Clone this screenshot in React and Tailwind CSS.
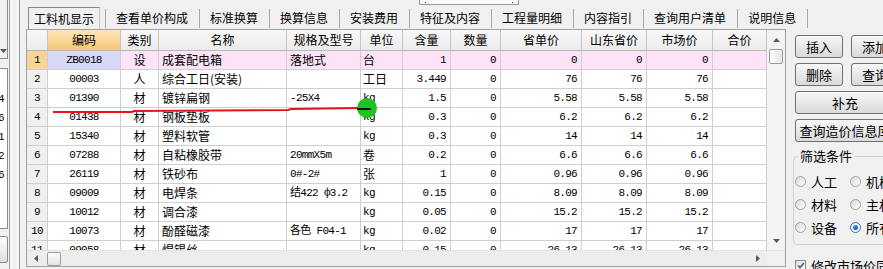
import React from 'react';

const cjk = "font-['Noto_Sans_CJK_SC','Noto_Sans',sans-serif]";
const mono = "font-['Liberation_Mono','Noto_Sans_CJK_SC',monospace] text-[11px] tracking-[-0.7px]";

const tabs = ['查看单价构成', '标准换算', '换算信息', '安装费用', '特征及内容', '工程量明细', '内容指引', '查询用户清单', '说明信息'];

// column widths and alignment
const cols = [
    { title: '', w: 'w-[21px]', align: 'justify-center' },
    { title: '编码', w: 'w-[73px]', align: 'justify-center' },
    { title: '类别', w: 'w-[38px]', align: 'justify-center' },
    { title: '名称', w: 'w-[128px]', align: 'justify-start pl-[3px]' },
    { title: '规格及型号', w: 'w-[74px]', align: 'justify-start pl-[3px]' },
    { title: '单位', w: 'w-[42px]', align: 'justify-start pl-[2px]' },
    { title: '含量', w: 'w-[48px]', align: 'justify-end pr-[4px]' },
    { title: '数量', w: 'w-[50px]', align: 'justify-end pr-[4px]' },
    { title: '省单价', w: 'w-[81px]', align: 'justify-end pr-[4px]' },
    { title: '山东省价', w: 'w-[65px]', align: 'justify-end pr-[4px]' },
    { title: '市场价', w: 'w-[66px]', align: 'justify-end pr-[4px]' },
    { title: '合价', w: 'w-[54px]', align: 'justify-end pr-[4px]' },
];

const rows = [
    ['1', 'ZB0018', '设', '成套配电箱', '落地式', '台', '1', '0', '0', '0', '0', ''],
    ['2', '00003', '人', '综合工日(安装)', '', '工日', '3.449', '0', '76', '76', '76', ''],
    ['3', '01390', '材', '镀锌扁钢', '-25X4', 'kg', '1.5', '0', '5.58', '5.58', '5.58', ''],
    ['4', '01438', '材', '钢板垫板', '', 'kg', '0.3', '0', '6.2', '6.2', '6.2', ''],
    ['5', '15340', '材', '塑料软管', '', 'kg', '0.3', '0', '14', '14', '14', ''],
    ['6', '07288', '材', '自粘橡胶带', '20mmX5m', '卷', '0.2', '0', '6.6', '6.6', '6.6', ''],
    ['7', '26119', '材', '铁砂布', '0#-2#', '张', '1', '0', '0.96', '0.96', '0.96', ''],
    ['8', '09009', '材', '电焊条', '结422 ф3.2', 'kg', '0.15', '0', '8.09', '8.09', '8.09', ''],
    ['9', '10012', '材', '调合漆', '', 'kg', '0.05', '0', '15.2', '15.2', '15.2', ''],
    ['10', '10073', '材', '酚醛磁漆', '各色 F04-1', 'kg', '0.02', '0', '17', '17', '17', ''],
    ['11', '09058', '材', '焊锡丝', '', 'kg', '0.15', '0', '26.13', '26.13', '26.13', ''],
];

const fontFor = (v) => (/[A-Za-z0-9]/.test(v) ? mono : `${cjk} text-[12px]`);

const Arrow = ({ dir }) => {
    const pts = { up: '0,4 3.5,0 7,4', down: '0,0 3.5,4 7,0', left: '4,0 0,3.5 4,7', right: '0,0 4,3.5 0,7' }[dir];
    const vertical = dir === 'up' || dir === 'down';
    return (
        <svg width={vertical ? 7 : 4} height={vertical ? 4 : 7}>
            <polygon points={pts} fill="#5a5a5a" />
        </svg>
    );
};

const LeftStrip = () => (
    <div className="w-[25px] h-full shrink-0 flex">
        <div className="w-[8px] flex flex-col">
            <div className="h-[59px] border-r border-b border-[#8c8c8c] relative">
                <div className="absolute left-0 bottom-[5px]"><Arrow dir="down" /></div>
            </div>
            <div className="mt-[9px] h-[161px] bg-white border-r border-y border-[#8c8c8c] overflow-hidden pt-[21px]">
                {['4', '6', '1', '2', '6'].map((n, i) => (
                    <div key={i} className={`h-[19px] flex items-center justify-end pr-[3px] ${mono}`}>{n}</div>
                ))}
            </div>
            <div className="mt-[7px] h-[27px] border border-l-0 border-[#8c8c8c] rounded-r-[3px] bg-linear-to-b from-white to-[#dedede]" />
        </div>
        <div className="ml-[1px] w-[3px] border-l border-[#a0a0a0] border-r border-r-white" />
        <div className="ml-[5px] w-[3px] border-l border-white border-r border-r-[#a0a0a0]" />
        <div className="ml-[3px] w-[2px]" />
    </div>
);

const Tabs = () => (
    <div className={`relative h-[29px] flex items-end text-[12px] whitespace-nowrap ${cjk}`}>
        <div className="absolute left-[394px] top-0 w-[100px] h-[5px] border-x border-b border-[#9a9a9a] bg-[#fafafa] flex justify-between items-center px-[5px]">
            <span className="w-[1px] h-[1px] bg-[#444]" />
            <span className="w-[1px] h-[1px] bg-[#444]" />
        </div>
        <div className="ml-[3px] w-[72px] h-[22px] shrink-0 border-l border-t border-[#8a8a8a] border-r border-r-[#c4c4c4] flex items-center justify-center">
            工料机显示
        </div>
        <div className="ml-[5px] shrink-0" />
        {tabs.map((t) => (
            <React.Fragment key={t}>
                <div className="w-px h-[19px] mb-[1px] shrink-0 bg-[#a8a8a8]" />
                <div className="h-[22px] pl-[10px] pr-[11px] shrink-0 flex items-center">{t}</div>
            </React.Fragment>
        ))}
        <div className="w-px h-[19px] mb-[1px] shrink-0 bg-[#a8a8a8]" />
    </div>
);

const Grid = () => (
    <div className="ml-[1px] w-[760px] h-[238px] border border-[#a0a0a0] bg-white flex flex-col">
        <div className="flex h-[220px]">
            <div className="w-[740px] overflow-hidden">
                {/* header */}
                <div className={`flex h-[21px] border-b border-[#b8b8b8] text-[12px] ${cjk}`}>
                    {cols.map((c, i) => (
                        <div
                            key={i}
                            className={`${c.w} shrink-0 h-full flex items-center justify-center border-r border-[#c4c4c4] ${i === 1 ? 'bg-linear-to-b from-[#fde5b8] to-[#f6c776]' : 'bg-linear-to-b from-[#f8f8f8] to-[#ebebeb]'}`}
                        >
                            {c.title}
                        </div>
                    ))}
                </div>
                {/* rows */}
                {rows.map((r, ri) => (
                    <div key={ri} className={`flex h-[19px] border-b border-[#cfcfcf] ${ri === 0 ? 'bg-[#fce3f7]' : 'bg-white'}`}>
                        {r.map((v, ci) => {
                            let bg = '';
                            if (ci === 0) bg = ri === 0 ? 'bg-[#f8d596]' : 'bg-[#f0f0f0]';
                            else if (ci === 1 && ri === 0) bg = 'bg-[#d7d7f8]';
                            return (
                                <div
                                    key={ci}
                                    className={`${cols[ci].w} ${cols[ci].align} ${bg} ${fontFor(v)} shrink-0 h-full flex items-center whitespace-nowrap overflow-hidden border-r border-[#cfcfcf]`}
                                >
                                    {v}
                                </div>
                            );
                        })}
                    </div>
                ))}
            </div>
            {/* vertical scroll */}
            <div className="w-[18px] h-full bg-[#f3f3f3] flex flex-col items-center">
                <div className="h-[19px] flex items-center"><Arrow dir="up" /></div>
                <div className="w-[14px] h-[15px] rounded-[2px] border border-[#9c9c9c] bg-linear-to-r from-white to-[#e6e6e6]" />
                <div className="flex-1" />
                <div className="h-[19px] flex items-center"><Arrow dir="down" /></div>
            </div>
        </div>
        {/* horizontal scroll */}
        <div className="h-[16px] flex border-t border-[#e2e2e2]">
            <div className="w-[740px] bg-[#ededed] flex items-center">
                <div className="w-[18px] flex justify-center"><Arrow dir="left" /></div>
                <div className="ml-[2px] w-[14px] h-[14px] rounded-[2px] border border-[#9c9c9c] bg-linear-to-b from-white to-[#e2e2e2]" />
                <div className="flex-1" />
                <div className="w-[18px] flex justify-center"><Arrow dir="right" /></div>
            </div>
            <div className="w-[18px] bg-[#f0f0f0]" />
        </div>
    </div>
);

const Btn = ({ w, children, mt = '' }) => (
    <div className={`${w} ${mt} h-[23px] shrink-0 rounded-[3px] border border-[#707070] bg-linear-to-b from-[#f7f7f7] to-[#dadada] flex items-center justify-center whitespace-nowrap`}>
        {children}
    </div>
);

const Radio = ({ label, checked, w = '' }) => (
    <div className={`flex items-center shrink-0 ${w}`}>
        <div className={`w-[11px] h-[11px] rounded-full border flex items-center justify-center ${checked ? 'border-[#3c6fa8] bg-linear-to-br from-[#dfe9f5] to-white' : 'border-[#a2a2a2] bg-linear-to-br from-[#d8d8d8] to-white'}`}>
            {checked && <div className="w-[5px] h-[5px] rounded-full bg-linear-to-br from-[#4aa0f0] to-[#0a4fa8]" />}
        </div>
        <span className="ml-[5px] whitespace-nowrap">{label}</span>
    </div>
);

const RightPanel = () => (
    <div className={`flex-1 min-w-0 pl-[9px] pt-[35px] text-[13px] ${cjk}`}>
        <div className="flex gap-[8px]">
            <Btn w="w-[48px]">插入</Btn>
            <Btn w="w-[48px]">添加</Btn>
        </div>
        <div className="flex gap-[8px] mt-[5px]">
            <Btn w="w-[48px]">删除</Btn>
            <Btn w="w-[48px]">查询</Btn>
        </div>
        <Btn w="w-[100px]" mt="mt-[5px]">补充</Btn>
        <Btn w="w-[100px]" mt="mt-[5px]">查询造价信息库</Btn>
        <fieldset className="mt-[7px] ml-[-2px] w-[120px] h-[96px] border border-[#d2d2d2] rounded-[4px] pl-[1px]">
            <legend className="ml-[3px] px-[2px] leading-[14px]">筛选条件</legend>
            <div className="mt-[7px] flex flex-col">
                <div className="h-[23px] flex items-center">
                    <Radio label="人工" w="w-[55px]" />
                    <Radio label="机械" />
                </div>
                <div className="h-[23px] flex items-center">
                    <Radio label="材料" w="w-[55px]" />
                    <Radio label="主材" />
                </div>
                <div className="h-[23px] flex items-center">
                    <Radio label="设备" w="w-[55px]" />
                    <Radio label="所有" checked />
                </div>
            </div>
        </fieldset>
        <div className="mt-[14px] flex items-center whitespace-nowrap">
            <div className="w-[11px] h-[11px] shrink-0 border border-[#8a8a8a] bg-linear-to-br from-[#dcdcdc] to-white flex items-center justify-center">
                <svg width="8" height="7"><polyline points="1,3.5 3,5.5 7,1" stroke="#3a5a8c" strokeWidth="1.6" fill="none" /></svg>
            </div>
            <span className="ml-[5px] leading-[13px]">修改市场价同步</span>
        </div>
    </div>
);

const Annotation = () => (
    <svg className="absolute left-0 top-0 pointer-events-none" width="883" height="269">
        <polyline points="53,112 132,112 134,111 288,110 291,109 360,108" stroke="#e5141b" strokeWidth="2" fill="none" />
        <circle cx="367" cy="108" r="10" fill="#1fc21f" />
        <line x1="357" y1="109" x2="371" y2="109" stroke="#111" strokeWidth="2" />
    </svg>
);

export default function App() {
    return (
        <div className="relative w-[883px] h-[269px] overflow-hidden bg-[#f0f0f0] flex text-black">
            <LeftStrip />
            <div className="w-[761px] shrink-0 flex flex-col">
                <Tabs />
                <Grid />
            </div>
            <RightPanel />
            <Annotation />
        </div>
    );
}
